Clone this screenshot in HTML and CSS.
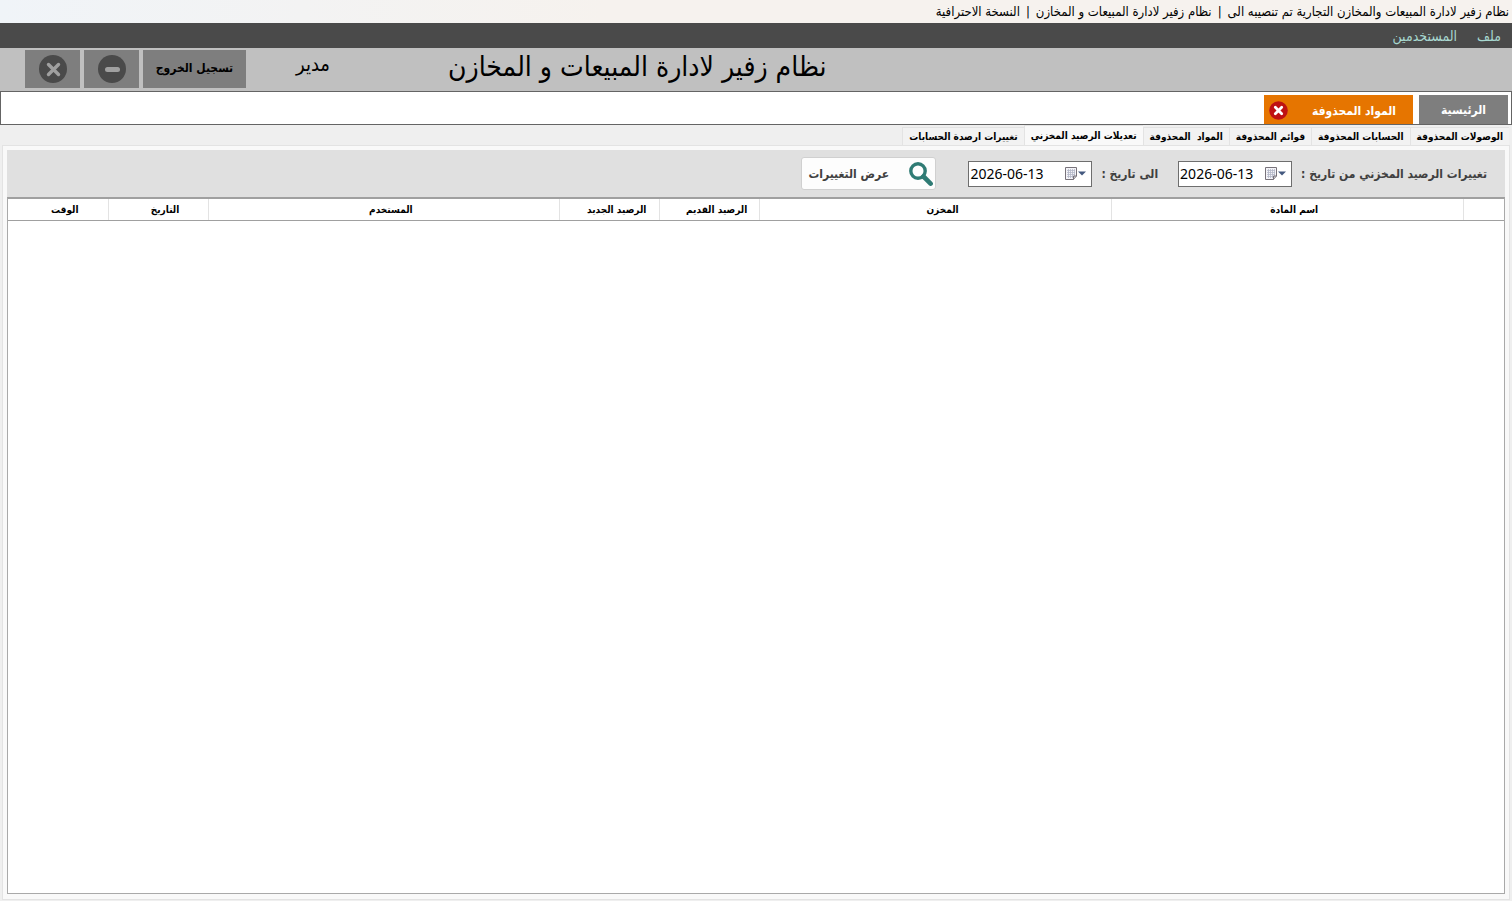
FILE: index.html
```html
<!DOCTYPE html>
<html lang="ar" dir="rtl">
<head>
    <meta charset="UTF-8">
    <meta name="viewport" content="width=device-width, initial-scale=1.0">
    <title>نظام زفير لادارة المبيعات و المخازن</title>
    <link rel="stylesheet" href="styles.css">
</head>
<body>

<!-- Window title -->
<div class="titlebar">
    <span>نظام زفير لادارة المبيعات والمخازن التجارية تم تنصيبه الى</span>
    <span>|</span>
    <span>نظام زفير لادارة المبيعات و المخازن</span>
    <span>|</span>
    <span>النسخة الاحترافية</span>
</div>

<!-- Menu -->
<nav class="menu">
    <a href="#">ملف</a>
    <a href="#">المستخدمين</a>
</nav>

<!-- Header -->
<header class="header">
    <h1>نظام زفير لادارة المبيعات و المخازن</h1>
    <span class="user">مدير</span>
    <div class="header-buttons">
        <button class="logout">تسجيل الخروج</button>
        <button class="round" aria-label="تصغير">
            <svg width="28" height="28" viewBox="0 0 28 28">
                <circle cx="14" cy="14" r="14" fill="#4a4a4a"/>
                <path d="M9.5 14.5H19.5" stroke="#a0a0a0" stroke-width="5" stroke-linecap="round"/>
            </svg>
        </button>
        <button class="round" aria-label="اغلاق">
            <svg width="28" height="28" viewBox="0 0 28 28">
                <circle cx="14" cy="14" r="14" fill="#4a4a4a"/>
                <path d="M9.5 9.5L19.5 19.5M19.5 9.5L9.5 19.5" stroke="#a0a0a0" stroke-width="3.4" stroke-linecap="round"/>
            </svg>
        </button>
    </div>
</header>

<!-- Open pages -->
<div class="pages">
    <button class="page">الرئيسية</button>
    <div class="page page-active">
        <span>المواد المحذوفة</span>
        <button class="page-close" aria-label="اغلاق">
            <svg width="19" height="19" viewBox="0 0 19 19">
                <circle cx="9.5" cy="9.5" r="9.3" fill="#bf1212"/>
                <path d="M6.3 6.3L12.7 12.7M12.7 6.3L6.3 12.7" stroke="#fff" stroke-width="2.8" stroke-linecap="round"/>
            </svg>
        </button>
    </div>
</div>

<!-- Tabs -->
<div class="tabs">
    <button class="tab">الوصولات المحذوفة</button>
    <button class="tab">الحسابات المحذوفة</button>
    <button class="tab">قوائم المحذوفة</button>
    <button class="tab">المواد &nbsp;المحذوفة</button>
    <button class="tab tab-active">تعديلات الرصيد المخزني</button>
    <button class="tab">تغييرات ارصدة الحسابات</button>
</div>

<main class="panel">
    <form class="filter">
        <label for="from">تغييرات الرصيد المخزني من تاريخ :</label>
        <div class="date date-from">
            <input type="text" id="from" value="2026-06-13">
            <svg width="21" height="13" viewBox="0 0 21 13">
                <path d="M0.5 0.5H11.5V9L8.5 12.5H0.5Z" fill="#f4f4f8" stroke="#77727a"/>
                <path d="M2 3.5H10M2 5.5H10M2 7.5H10M2 9.5H8M3.5 2V11M5.5 2V11M7.5 2V11M9.5 2V9" stroke="#b4b8c8" stroke-width="0.8"/>
                <path d="M11.5 9H8.5V12.5" fill="#c0c0c8" stroke="#77727a"/>
                <path d="M13 4.5H21L17 8.5Z" fill="#44597f"/>
            </svg>
        </div>
        <label for="to">الى تاريخ :</label>
        <div class="date">
            <input type="text" id="to" value="2026-06-13">
            <svg width="21" height="13" viewBox="0 0 21 13">
                <path d="M0.5 0.5H11.5V9L8.5 12.5H0.5Z" fill="#f4f4f8" stroke="#77727a"/>
                <path d="M2 3.5H10M2 5.5H10M2 7.5H10M2 9.5H8M3.5 2V11M5.5 2V11M7.5 2V11M9.5 2V9" stroke="#b4b8c8" stroke-width="0.8"/>
                <path d="M11.5 9H8.5V12.5" fill="#c0c0c8" stroke="#77727a"/>
                <path d="M13 4.5H21L17 8.5Z" fill="#44597f"/>
            </svg>
        </div>
        <button type="button" class="show">
            <svg width="24" height="24" viewBox="0 0 24 24" fill="none" stroke="#2f7b74">
                <circle cx="9" cy="9" r="7.2" stroke-width="3.4"/>
                <path d="M14.5 14.5L21.6 21.6" stroke-width="4.6" stroke-linecap="round"/>
            </svg>
            <span>عرض التغييرات</span>
        </button>
    </form>

    <div class="grid">
        <table>
            <colgroup>
                <col class="col-mark">
                <col>
                <col>
                <col class="col-small">
                <col class="col-small">
                <col>
                <col class="col-small">
                <col class="col-small">
            </colgroup>
            <thead>
                <tr>
                    <th></th>
                    <th>اسم المادة</th>
                    <th>المخزن</th>
                    <th>الرصيد القديم</th>
                    <th>الرصيد الجديد</th>
                    <th>المستخدم</th>
                    <th>التاريخ</th>
                    <th>الوقت</th>
                </tr>
            </thead>
            <tbody></tbody>
        </table>
    </div>
</main>

</body>
</html>
```

FILE: styles.css
```css
* {
    box-sizing: border-box;
}
body {
    margin: 0;
    min-height: 100vh;
    display: flex;
    flex-direction: column;
    background-color: #efefef;
    font-family: "DejaVu Sans Condensed", "DejaVu Sans", sans-serif;
    font-size: 12px;
    color: #000;
}
button {
    font-family: inherit;
    border: none;
    padding: 0;
    cursor: pointer;
}
svg {
    display: block;
    flex: none;
}
.titlebar {
    display: flex;
    gap: 6px;
    height: 23px;
    padding: 0 3px;
    background: linear-gradient(to left, #f6f2ee, #f6f2ee 60%, #f0f4f8);
    font-size: 13px;
    line-height: 23px;
    white-space: nowrap;
}
.menu {
    display: flex;
    gap: 20px;
    height: 25px;
    padding: 0 11px;
    background-color: #4a4a4a;
    line-height: 26px;
}
.menu a {
    color: #a8d8d0;
    font-size: 14px;
    text-decoration: none;
}
.header {
    display: flex;
    justify-content: flex-end;
    height: 43px;
    padding: 2px 25px;
    background-color: #c0c0c0;
}
.header h1 {
    margin: 0;
    font-size: 28px;
    font-weight: normal;
    line-height: 34px;
    white-space: nowrap;
}
.user {
    width: 202px;
    padding-right: 118px;
    font-size: 20px;
    line-height: 28px;
}
.header-buttons {
    display: flex;
    gap: 4px;
}
.header-buttons button {
    height: 38px;
    background-color: #7e7e7e;
}
.header-buttons .logout {
    width: 103px;
    padding: 0 0 3px;
    font-size: 12px;
    font-weight: bold;
}
.round {
    display: flex;
    align-items: center;
    justify-content: center;
    width: 55px;
}
.pages {
    display: flex;
    gap: 6px;
    height: 34px;
    padding: 3px 3px 0;
    background-color: #fff;
    border: 1px solid #646464;
}
.page {
    width: 89px;
    height: 29px;
    background-color: #7e7e7e;
    color: #fff;
    font-size: 12px;
    font-weight: bold;
}
.page-active {
    display: flex;
    align-items: center;
    justify-content: space-between;
    width: 149px;
    padding: 2px 17px 0 5px;
    background-color: #e67500;
}
.page-close {
    background: none;
}
.tabs {
    display: flex;
    align-items: flex-end;
    height: 20px;
    padding: 0 3px;
}
.tab {
    height: 18px;
    padding: 0 6px;
    background-color: #f2f2f2;
    border: 1px solid #e3e3e3;
    border-width: 1px 0 0 1px;
    font-size: 10px;
    font-weight: bold;
    line-height: 16px;
    white-space: nowrap;
}
.tab-active {
    height: 20px;
    background-color: #f9f9f9;
}
.panel {
    flex: 1;
    display: flex;
    flex-direction: column;
    margin: 0 2px 1px;
    padding: 4px 4px 5px;
    background-color: #f9f9f9;
    border: 1px solid #e3e3e3;
}
.filter {
    display: flex;
    align-items: center;
    height: 47px;
    padding: 0 18px;
    background-color: #e0e0e0;
}
.filter label {
    color: #404040;
    font-size: 12px;
    font-weight: bold;
}
.date {
    display: flex;
    align-items: center;
    direction: ltr;
    width: 124px;
    height: 26px;
    margin: 0 9px 0 20px;
    padding: 0 5px 0 1px;
    background-color: #fff;
    border: 1px solid #6e6e6e;
}
.date-from {
    width: 114px;
}
.date input {
    flex: 1;
    min-width: 0;
    border: none;
    padding: 0;
    font-family: "Noto Sans", sans-serif;
    font-size: 14px;
    outline: none;
}
.show {
    display: flex;
    align-items: center;
    justify-content: space-between;
    width: 135px;
    height: 33px;
    margin-right: 12px;
    padding: 0 2px 0 6px;
    background-color: #fdfdfd;
    border: 1px solid #d0d0d0;
    border-radius: 3px;
    color: #404040;
    font-size: 12px;
    font-weight: bold;
}
.grid {
    flex: 1;
    background-color: #fff;
    border: 1px solid #a9a9a9;
    border-top: 2px solid #a0a0a0;
}
table {
    width: 100%;
    table-layout: fixed;
    border-collapse: collapse;
}
th {
    height: 21px;
    padding: 0 0 0 14px;
    border-bottom: 1px solid #a0a0a0;
    border-left: 1px solid #e3e3e3;
    font-size: 10px;
    white-space: nowrap;
}
th:last-child {
    border-left: none;
}
.col-mark {
    width: 41px;
}
.col-small {
    width: 100px;
}
```
